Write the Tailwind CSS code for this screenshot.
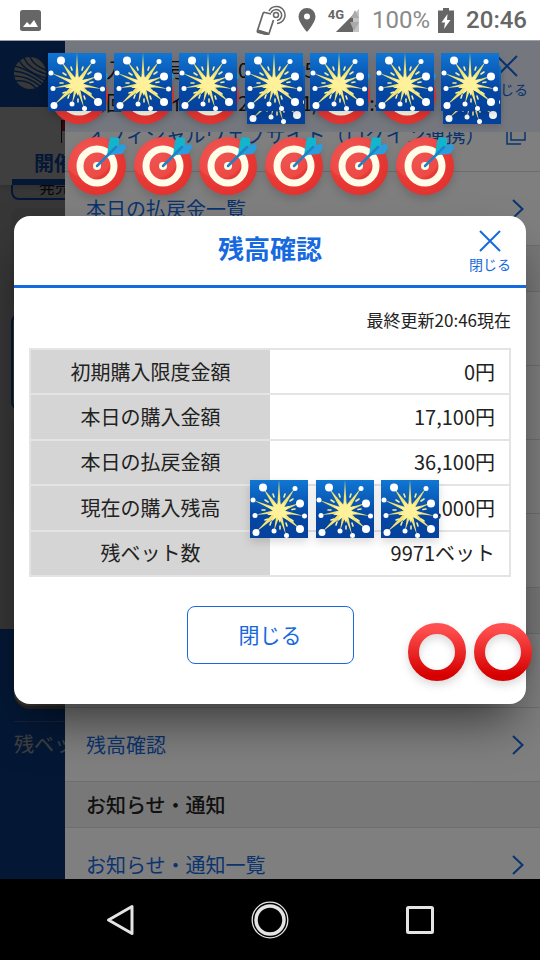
<!DOCTYPE html>
<html lang="ja">
<head>
    <meta charset="UTF-8">
    <meta name="viewport" content="width=device-width, initial-scale=1">
    <title>残高確認</title>
    <script src="https://cdn.jsdelivr.net/npm/@tailwindcss/browser@4"></script>
</head>
<body class="font-['Noto_Sans_CJK_JP',sans-serif] text-[#222222] bg-black">

<!-- Shared shapes -->
<svg class="absolute w-0 h-0" aria-hidden="true">
    <defs>
        <linearGradient id="night" x1="0" y1="0" x2="0" y2="1">
            <stop offset="0" stop-color="#1176d3"/>
            <stop offset=".6" stop-color="#0547a4"/>
            <stop offset="1" stop-color="#04419c"/>
        </linearGradient>
        <linearGradient id="red" x1="0" y1="0" x2="0" y2="1">
            <stop offset="0" stop-color="#ff4f4f"/>
            <stop offset="1" stop-color="#d60000"/>
        </linearGradient>
        <radialGradient id="board" cx=".35" cy=".3" r=".8">
            <stop offset="0" stop-color="#ef5552"/>
            <stop offset=".5" stop-color="#ee4a46"/>
            <stop offset=".55" stop-color="#e83a36"/>
            <stop offset="1" stop-color="#e3302d"/>
        </radialGradient>
    </defs>
    <symbol id="sparkler" viewBox="0 0 58 58">
        <rect width="58" height="58" fill="url(#night)"/>
        <g fill="#f4e571">
            <path d="M29 0L31 31H27z"/>
            <path d="M13 8L31 29L27 33z"/>
            <path d="M45 8L31 33L27 29z"/>
            <path d="M3 20L30 29L28 33z"/>
            <path d="M50 23L30 33L28 29z"/>
            <path d="M5 35L29 29V33z"/>
            <path d="M54 36L29 33V29z"/>
            <path d="M6 52L27 29L31 33z"/>
            <path d="M24 51L27 30L31 32z"/>
            <path d="M36 55L27 32L31 30z"/>
            <path d="M50 49L27 33L31 29z"/>
        </g>
        <path d="M29 20L31 25L35 22L34 27L40 26L35 31L42 34L35 35L38 40L32 37L30 43L27 37L21 42L24 35L17 35L23 31L17 26L24 27L22 21L27 25z" fill="#fff09a"/>
        <g fill="none" stroke="#f6eda0" stroke-width="1.600" stroke-linecap="round">
            <path d="M23 14l1 3M35 14l-1 3M15 20l3 2M43 19l-3 2M12 30h3M45 29l-3 .500M15 40l3-1M43 41l-3-2M20 45l1-3M30 49v-3M37 46l-1-3"/>
        </g>
        <g fill="#fff">
            <circle cx="13" cy="7.500" r="4"/>
            <circle cx="45" cy="8.500" r="2.500"/>
            <circle cx="3" cy="20" r="2.500"/>
            <circle cx="50" cy="23.500" r="4"/>
            <circle cx="5" cy="35.500" r="2.500"/>
            <circle cx="54.500" cy="36" r="2.500"/>
            <circle cx="6" cy="52.500" r="3.500"/>
            <circle cx="24" cy="51" r="2.500"/>
            <circle cx="36.500" cy="55.500" r="2.500"/>
            <circle cx="50" cy="49" r="4"/>
        </g>
    </symbol>
    <symbol id="target" viewBox="0 0 58 58">
        <circle cx="29" cy="29" r="29" fill="url(#board)"/>
        <circle cx="29" cy="29" r="17" fill="none" stroke="#fffde7" stroke-width="7"/>
        <circle cx="29" cy="29" r="4" fill="#fffde7"/>
        <path d="M39 19L41 4L43 0L51 1V11L43 18z" fill="#12b5cc"/>
        <path d="M39 19L50 8L57 7L58 11L54 17L42 18z" fill="#2a9ddc"/>
        <path d="M29 29L48 10" stroke="#1e82c8" stroke-width="2.500" stroke-linecap="round"/>
    </symbol>
    <symbol id="ring" viewBox="0 0 58 58">
        <circle cx="29" cy="29" r="23.500" fill="none" stroke="url(#red)" stroke-width="11"/>
    </symbol>
    <symbol id="cross" viewBox="0 0 22 22">
        <path d="M1 1L21 21M21 1L1 21" fill="none" stroke="currentColor" stroke-width="2"/>
    </symbol>
    <symbol id="chevron" viewBox="0 0 12 20">
        <path d="M1 1L10.500 10L1 19" fill="none" stroke="currentColor" stroke-width="2"/>
    </symbol>
</svg>

<div class="flex flex-col h-screen overflow-hidden">

    <!-- Status bar -->
    <header class="flex items-center justify-between h-[41px] shrink-0 bg-white border-b border-gray-400 pl-5 pr-[13px] text-[#666666] font-[Roboto,sans-serif]">
        <svg class="w-[21px] h-[21px]" viewBox="0 0 21 21">
            <rect width="21" height="21" rx="2.500" fill="#666"/>
            <path d="M3 17L7 12L10 15L14 10L18 17z" fill="#fff"/>
        </svg>
        <div class="flex items-center">
            <svg class="w-[30px] h-[30px]" viewBox="0 0 30 30" fill="none" stroke="#666">
                <path d="M15 9L9 7.500Q7.500 7 7 8.500L1.500 25.500Q1 27 2.500 27.500L11 29.500Q12.500 30 13 28.500L17.500 15" stroke-width="1.700"/>
                <path d="M2 26L12 29" stroke-width="3"/>
                <circle cx="20" cy="10" r="2.500" stroke-width="1.500"/>
                <path d="M15 8A5.500 5.500 0 1 1 21 15.500M13 6A8.500 8.500 0 1 1 21 18.500" stroke-width="1.500"/>
            </svg>
            <svg class="ml-3 w-[18px] h-6" viewBox="0 0 18 24">
                <path d="M9 0A8.500 8.500 0 0 0 .500 8.500C.500 14.500 9 24 9 24S17.500 14.500 17.500 8.500A8.500 8.500 0 0 0 9 0zM9 5.500a3 3 0 1 1 0 6a3 3 0 0 1 0-6z" fill="#666" fill-rule="evenodd"/>
            </svg>
            <span class="ml-3 mb-3 text-[13px] leading-none font-bold">4G</span>
            <svg class="-ml-2 w-6 h-6" viewBox="0 0 24 24">
                <path d="M23 1V24H0z" fill="#c4c4c4"/>
                <path d="M17 7V24H0z" fill="#666"/>
                <path d="M19 2L23 10H15zM14 14H23L18 23z" fill="#aaa"/>
            </svg>
            <span class="ml-3 text-2xl text-[#8a8a8a]">100%</span>
            <svg class="ml-2 w-4 h-[25px]" viewBox="0 0 16 25">
                <path d="M5 0H11V2.500H16V25H0V2.500H5z" fill="#666"/>
                <path d="M9.500 6L3.500 14.500H7L6 21L12.500 12H9z" fill="#fff"/>
            </svg>
            <span class="ml-3 text-2xl font-medium">20:46</span>
        </div>
    </header>

    <main class="relative flex flex-1 min-h-0 overflow-hidden bg-white">

        <!-- Page behind the drawer -->
        <div class="relative flex flex-col w-[65px] shrink-0 overflow-hidden whitespace-nowrap bg-[#dddddd]">
            <div class="h-[66px] shrink-0 bg-[#1060d8] pl-[14px] pt-4">
                <svg class="w-8 h-8 text-[#e0e0d8]" viewBox="0 0 32 32">
                    <circle cx="16" cy="16" r="16" fill="currentColor"/>
                    <g fill="none" stroke="#1060d8" stroke-width="1.500">
                        <path d="M0 9Q12 11 32 25M0 14Q14 15 29 27M0 19Q14 19 26 29M1 24Q14 22 22 31"/>
                        <path d="M5 3Q10 14 32 21M10 1Q15 12 32 17M16 0Q20 9 32 13"/>
                    </g>
                </svg>
            </div>
            <div class="flex flex-col justify-between h-[78px] shrink-0 bg-white pl-3 pt-3 shadow-md z-10">
                <svg class="self-end w-1 h-6" viewBox="0 0 4 24">
                    <path d="M0 1H4V12H0z" fill="#d22"/>
                    <path d="M.500 1V24" stroke="#222"/>
                </svg>
                <div class="border-b-6 border-[#1060d8] pl-[22px] text-xl leading-8 font-bold text-[#1060d8]">開催</div>
            </div>
            <div class="flex flex-col gap-2 flex-1 min-h-0 pl-[11px]">
                <div class="h-[15px] shrink-0 flex items-end rounded-bl-lg border-l-2 border-b-2 border-[#1060d8] pl-[26px] text-base leading-6">発売</div>
                <div class="h-[98px] shrink-0 rounded-l-lg bg-[#d2d2d2]"></div>
                <div class="h-24 shrink-0 rounded-l-lg border-2 border-r-0 border-[#1060d8]"></div>
                <div class="h-24 shrink-0 rounded-l-lg bg-[#d2d2d2]"></div>
            </div>
            <div class="h-[250px] shrink-0 bg-[#1060d8] pl-[14px]">
                <div class="h-20 rounded-bl-2xl bg-[#dddddd] border-b-3 border-[#999999]"></div>
                <div class="mt-3 border-t border-white/30 pt-2 text-xl leading-7 text-white">残ベット数</div>
            </div>
            <div class="absolute inset-0 z-20 bg-black/50"></div>
            <div class="absolute inset-0 z-20 bg-black/50"></div>
        </div>

        <!-- Drawer menu -->
        <div class="relative flex flex-col flex-1 min-w-0 bg-white">
            <div class="relative z-10 flex justify-between h-[91px] shrink-0 bg-[#e8eefd] pl-[21px] pr-3">
                <dl class="grid grid-cols-[152px_auto] content-start pt-3 text-xl leading-[33px] whitespace-nowrap">
                    <dt>加入者番号</dt>
                    <dd>0000005</dd>
                    <dt>前回ログイン</dt>
                    <dd>2021/01/01 20:46</dd>
                </dl>
                <button class="flex flex-col items-center pt-[14px] text-sm text-[#1669de]">
                    <svg class="w-[22px] h-[22px]"><use href="#cross"/></svg>
                    <span class="pt-0.5">閉じる</span>
                </button>
            </div>
            <nav class="flex-1 min-h-0 overflow-hidden text-xl text-[#1669de]">
                <a href="#" class="-mt-[34px] h-[74px] flex items-center justify-between border-b border-[#dddddd] pl-[21px] pr-[14px]">
                    <span class="whitespace-nowrap">オフィシャルウェブサイト（ログイン連携）</span>
                    <svg class="w-5 h-5 shrink-0" viewBox="0 0 20 20" fill="none" stroke="currentColor" stroke-width="1.500"><path d="M5 1H19V15H5zM1 5V19H15"/></svg>
                </a>
                <a href="#" class="h-[74px] flex items-center justify-between border-b border-[#dddddd] pl-[21px] pr-4">
                    <span>本日の払戻金一覧</span>
                    <svg class="w-3 h-5"><use href="#chevron"/></svg>
                </a>
                <div class="h-[46px] border-b border-[#dddddd] bg-[#f0f0f0]"></div>
                <div class="h-[74px] border-b border-[#dddddd]"></div>
                <div class="h-[74px] border-b border-[#dddddd]"></div>
                <div class="h-[74px] border-b border-[#dddddd]"></div>
                <div class="h-[74px] border-b border-[#dddddd]"></div>
                <div class="h-[46px] border-b border-[#dddddd] bg-[#f0f0f0]"></div>
                <div class="h-[74px] border-b border-[#dddddd]"></div>
                <a href="#" class="h-[74px] flex items-center justify-between border-b border-[#dddddd] pl-[21px] pr-4">
                    <span>残高確認</span>
                    <svg class="w-3 h-5"><use href="#chevron"/></svg>
                </a>
                <h2 class="h-[46px] flex items-center border-b border-[#dddddd] bg-[#f0f0f0] pl-[21px] font-medium text-[#222222]">お知らせ・通知</h2>
                <a href="#" class="h-[74px] flex items-center justify-between pl-[21px] pr-4">
                    <span>お知らせ・通知一覧</span>
                    <svg class="w-3 h-5"><use href="#chevron"/></svg>
                </a>
            </nav>
            <div class="absolute inset-0 z-20 bg-black/50"></div>
        </div>

        <!-- Balance dialog -->
        <div class="absolute inset-0 z-30 flex items-center px-[14px]">
            <section role="dialog" aria-labelledby="dialog-title" class="w-full rounded-2xl bg-white shadow-2xl shadow-black/60">
                <div class="relative h-[72px] flex justify-center border-b-3 border-[#1669de] pt-3 text-[#1669de]">
                    <h1 id="dialog-title" class="text-[26px] leading-10 font-bold">残高確認</h1>
                    <button class="absolute right-[15px] top-[14px] flex flex-col items-center text-sm">
                        <svg class="w-[22px] h-[22px]"><use href="#cross"/></svg>
                        <span class="pt-0.5">閉じる</span>
                    </button>
                </div>
                <div class="px-[15px] pt-[18px] pb-10">
                    <p class="text-right text-[17px] leading-7">最終更新20:46現在</p>
                    <table class="mt-[14px] w-full h-[229px] table-fixed border-collapse border-2 border-[#e4e4e4] text-xl">
                        <tr class="border-b-2 border-[#e4e4e4]">
                            <th class="bg-[#d5d5d5] font-normal">初期購入限度金額</th>
                            <td class="pr-[14px] text-right">0円</td>
                        </tr>
                        <tr class="border-b-2 border-[#e4e4e4]">
                            <th class="bg-[#d5d5d5] font-normal">本日の購入金額</th>
                            <td class="pr-[14px] text-right">17,100円</td>
                        </tr>
                        <tr class="border-b-2 border-[#e4e4e4]">
                            <th class="bg-[#d5d5d5] font-normal">本日の払戻金額</th>
                            <td class="pr-[14px] text-right">36,100円</td>
                        </tr>
                        <tr class="border-b-2 border-[#e4e4e4]">
                            <th class="bg-[#d5d5d5] font-normal">現在の購入残高</th>
                            <td class="pr-[14px] text-right">,000円</td>
                        </tr>
                        <tr>
                            <th class="bg-[#d5d5d5] font-normal">残ベット数</th>
                            <td class="pr-[14px] text-right">9971ベット</td>
                        </tr>
                    </table>
                    <button class="block mx-auto mt-[29px] w-[167px] h-[58px] rounded-lg border border-[#1669de] text-[21px] text-[#1669de]">閉じる</button>
                </div>
            </section>
        </div>

        <!-- Stickers -->
        <div class="absolute z-40 left-[50px] top-[25px] w-[451px] flex justify-between">
            <svg class="w-[58px] h-[58px] drop-shadow-md"><use href="#target"/></svg>
            <svg class="w-[58px] h-[58px] drop-shadow-md"><use href="#target"/></svg>
            <svg class="w-[58px] h-[58px] drop-shadow-md"><use href="#target"/></svg>
            <svg class="w-[58px] h-[58px] drop-shadow-md"><use href="#sparkler"/></svg>
            <svg class="w-[58px] h-[58px] drop-shadow-md"><use href="#target"/></svg>
            <svg class="w-[58px] h-[58px] drop-shadow-md"><use href="#target"/></svg>
            <svg class="w-[58px] h-[58px] drop-shadow-md"><use href="#sparkler"/></svg>
        </div>
        <div class="absolute z-40 left-12 top-3 w-[451px] flex justify-between">
            <svg class="w-[58px] h-[58px] drop-shadow-lg"><use href="#sparkler"/></svg>
            <svg class="w-[58px] h-[58px] drop-shadow-lg"><use href="#sparkler"/></svg>
            <svg class="w-[58px] h-[58px] drop-shadow-lg"><use href="#sparkler"/></svg>
            <svg class="w-[58px] h-[58px] drop-shadow-lg"><use href="#sparkler"/></svg>
            <svg class="w-[58px] h-[58px] drop-shadow-lg"><use href="#sparkler"/></svg>
            <svg class="w-[58px] h-[58px] drop-shadow-lg"><use href="#sparkler"/></svg>
            <svg class="w-[58px] h-[58px] drop-shadow-lg"><use href="#sparkler"/></svg>
        </div>
        <div class="absolute z-40 left-[68px] top-24 w-[386px] flex justify-between">
            <svg class="w-[58px] h-[58px] drop-shadow-lg"><use href="#target"/></svg>
            <svg class="w-[58px] h-[58px] drop-shadow-lg"><use href="#target"/></svg>
            <svg class="w-[58px] h-[58px] drop-shadow-lg"><use href="#target"/></svg>
            <svg class="w-[58px] h-[58px] drop-shadow-lg"><use href="#target"/></svg>
            <svg class="w-[58px] h-[58px] drop-shadow-lg"><use href="#target"/></svg>
            <svg class="w-[58px] h-[58px] drop-shadow-lg"><use href="#target"/></svg>
        </div>
        <div class="absolute z-40 left-[250px] top-[439px] w-[189px] flex justify-between">
            <svg class="w-[58px] h-[58px] drop-shadow-lg"><use href="#sparkler"/></svg>
            <svg class="w-[58px] h-[58px] drop-shadow-lg"><use href="#sparkler"/></svg>
            <svg class="w-[58px] h-[58px] drop-shadow-lg"><use href="#sparkler"/></svg>
        </div>
        <div class="absolute z-40 left-[408px] top-[582px] w-[124px] flex justify-between">
            <svg class="w-[58px] h-[58px] drop-shadow-lg"><use href="#ring"/></svg>
            <svg class="w-[58px] h-[58px] drop-shadow-lg"><use href="#ring"/></svg>
        </div>
    </main>

    <!-- Android navigation -->
    <footer class="grid grid-cols-3 items-center justify-items-center h-[81px] shrink-0 bg-black px-[45px]">
        <button aria-label="戻る">
            <svg class="w-[38px] h-[38px]" viewBox="0 0 38 38"><path d="M7.500 19L31 5.500V32.500z" fill="none" stroke="#e4e4e4" stroke-width="3" stroke-linejoin="round"/></svg>
        </button>
        <button aria-label="ホーム">
            <svg class="w-[38px] h-[38px]" viewBox="0 0 38 38" fill="none" stroke="#e4e4e4">
                <circle cx="19" cy="19" r="17.800" stroke-width="1.300"/>
                <circle cx="19" cy="19" r="14" stroke-width="3.500"/>
            </svg>
        </button>
        <button aria-label="アプリ履歴">
            <svg class="w-[38px] h-[38px]" viewBox="0 0 38 38"><rect x="6.500" y="6.500" width="25" height="25" rx="1" fill="none" stroke="#e4e4e4" stroke-width="3"/></svg>
        </button>
    </footer>

</div>

</body>
</html>
